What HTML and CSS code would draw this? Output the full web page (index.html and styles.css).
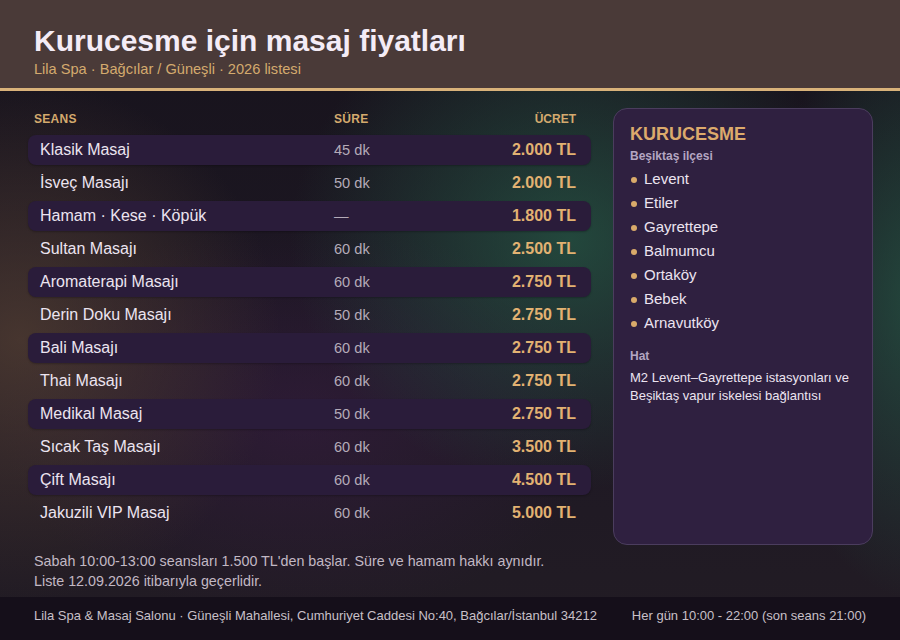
FILE: index.html
```html
<!DOCTYPE html>
<html lang="tr">
<head>
<meta charset="utf-8">
<title>Kurucesme için masaj fiyatları</title>
<link rel="stylesheet" href="styles.css">
</head>
<body>
<div class="page">
  <header class="top">
    <h1 class="title">Kurucesme için masaj fiyatları</h1>
    <p class="subtitle">Lila Spa · Bağcılar / Güneşli · 2026 listesi</p>
  </header>
  <main class="main">
    <section class="prices">
      <div class="colheads">
        <span>SEANS</span>
        <span>SÜRE</span>
        <span class="right">ÜCRET</span>
      </div>
      <div class="rows">
        <div class="row alt"><span class="name">Klasik Masaj</span><span class="dur">45 dk</span><span class="price">2.000 TL</span></div>
        <div class="row"><span class="name">İsveç Masajı</span><span class="dur">50 dk</span><span class="price">2.000 TL</span></div>
        <div class="row alt"><span class="name">Hamam · Kese · Köpük</span><span class="dur">—</span><span class="price">1.800 TL</span></div>
        <div class="row"><span class="name">Sultan Masajı</span><span class="dur">60 dk</span><span class="price">2.500 TL</span></div>
        <div class="row alt"><span class="name">Aromaterapi Masajı</span><span class="dur">60 dk</span><span class="price">2.750 TL</span></div>
        <div class="row"><span class="name">Derin Doku Masajı</span><span class="dur">50 dk</span><span class="price">2.750 TL</span></div>
        <div class="row alt"><span class="name">Bali Masajı</span><span class="dur">60 dk</span><span class="price">2.750 TL</span></div>
        <div class="row"><span class="name">Thai Masajı</span><span class="dur">60 dk</span><span class="price">2.750 TL</span></div>
        <div class="row alt"><span class="name">Medikal Masaj</span><span class="dur">50 dk</span><span class="price">2.750 TL</span></div>
        <div class="row"><span class="name">Sıcak Taş Masajı</span><span class="dur">60 dk</span><span class="price">3.500 TL</span></div>
        <div class="row alt"><span class="name">Çift Masajı</span><span class="dur">60 dk</span><span class="price">4.500 TL</span></div>
        <div class="row"><span class="name">Jakuzili VIP Masaj</span><span class="dur">60 dk</span><span class="price">5.000 TL</span></div>
      </div>
    </section>
    <aside class="panel">
      <h2 class="panel-title">KURUCESME</h2>
      <div class="label">Beşiktaş ilçesi</div>
      <ul class="places">
        <li>Levent</li>
        <li>Etiler</li>
        <li>Gayrettepe</li>
        <li>Balmumcu</li>
        <li>Ortaköy</li>
        <li>Bebek</li>
        <li>Arnavutköy</li>
      </ul>
      <div class="label hat">Hat</div>
      <p class="desc">M2 Levent–Gayrettepe istasyonları ve Beşiktaş vapur iskelesi bağlantısı</p>
    </aside>
  </main>
  <div class="notes">
    <p>Sabah 10:00-13:00 seansları 1.500 TL'den başlar. Süre ve hamam hakkı aynıdır.</p>
    <p>Liste 12.09.2026 itibarıyla geçerlidir.</p>
  </div>
  <footer class="foot">
    <span>Lila Spa &amp; Masaj Salonu · Güneşli Mahallesi, Cumhuriyet Caddesi No:40, Bağcılar/İstanbul 34212</span>
    <span>Her gün 10:00 - 22:00 (son seans 21:00)</span>
  </footer>
</div>
</body>
</html>
```
FILE: styles.css
```css
* { box-sizing: border-box; }
html, body { margin: 0; padding: 0; }
body {
  width: 900px;
  height: 640px;
  overflow: hidden;
  font-family: "Liberation Sans", Arial, sans-serif;
  color: #ece4f0;
  background: #1a1520;
}
.page {
  width: 900px;
  height: 640px;
  display: flex;
  flex-direction: column;
  background:
    radial-gradient(ellipse 280px 250px at 570px 240px, rgba(38, 92, 72, 0.7), rgba(38, 92, 72, 0) 100%),
    radial-gradient(ellipse 160px 300px at 920px 300px, rgba(38, 92, 72, 0.7), rgba(38, 92, 72, 0) 100%),
    radial-gradient(ellipse 260px 260px at 20px 340px, rgba(88, 66, 52, 0.7), rgba(88, 66, 52, 0) 100%),
    radial-gradient(ellipse 300px 200px at 300px 420px, rgba(60, 30, 70, 0.5), rgba(60, 30, 70, 0) 100%),
    linear-gradient(180deg, #17131c 0%, #1e1824 60%, #221c24 100%);
}
.top {
  height: 91px;
  background: #4a3a38;
  border-bottom: 3px solid #d9b27a;
  padding: 25px 34px 0;
}
.title {
  margin: 0;
  font-size: 30px;
  line-height: 32px;
  font-weight: 700;
  color: #f4ecf6;
}
.subtitle {
  margin: 3px 0 0;
  font-size: 14.6px;
  line-height: 18px;
  color: #d4aa6e;
}
.main {
  display: flex;
  gap: 22px;
  padding: 17px 27px 0 28px;
  height: 454px;
}
.prices {
  width: 563px;
}
.colheads {
  display: grid;
  grid-template-columns: 300px 1fr auto;
  padding: 4px 15px 0 6px;
  height: 27px;
  font-size: 12px;
  line-height: 14px;
  font-weight: 700;
  letter-spacing: 0.3px;
  color: #d4aa6e;
}
.colheads .right { text-align: right; letter-spacing: 0; }
.rows {
  display: flex;
  flex-direction: column;
  gap: 3px;
}
.row {
  display: grid;
  grid-template-columns: 294px 1fr auto;
  align-items: center;
  height: 30px;
  padding: 0 15px 0 12px;
  border-radius: 8px;
}
.row.alt {
  background: #2a1c3a;
  box-shadow: 0 1px 2px rgba(0, 0, 0, 0.25);
}
.name {
  font-size: 16px;
  color: #ece4f0;
}
.dur {
  font-size: 14.6px;
  color: #b4abb8;
}
.price {
  font-size: 16px;
  font-weight: 700;
  color: #e2b272;
  text-align: right;
}
.panel {
  width: 260px;
  height: 437px;
  background: #2f2040;
  border: 1px solid #4b3d5e;
  border-radius: 14px;
  padding: 15px 16px;
}
.panel-title {
  margin: 0;
  font-size: 18px;
  line-height: 20px;
  font-weight: 700;
  color: #dcaa6c;
}
.label {
  margin-top: 5px;
  font-size: 12px;
  line-height: 14px;
  font-weight: 700;
  color: #b4a6c2;
}
.places {
  list-style: none;
  margin: 4px 0 0;
  padding: 0;
}
.places li {
  display: flex;
  align-items: center;
  gap: 7px;
  font-size: 15px;
  line-height: 24px;
  color: #ece4f0;
}
.places li::before {
  content: "";
  width: 6px;
  height: 6px;
  border-radius: 50%;
  background: #d9aa6a;
  margin-left: 1px;
  margin-top: 2px;
}
.label.hat {
  margin-top: 14px;
}
.desc {
  margin: 6px 0 0;
  font-size: 13px;
  line-height: 18px;
  color: #ece4f0;
}
.notes {
  padding: 6px 34px 0;
  height: 52px;
  font-size: 14.3px;
  line-height: 20px;
  color: #c2b8c4;
}
.notes p { margin: 0; }
.foot {
  margin-top: auto;
  height: 43px;
  display: flex;
  justify-content: space-between;
  align-items: flex-start;
  padding: 11px 34px 0;
  background: #150f1a;
  font-size: 13px;
  line-height: 16px;
  color: #c8c0c8;
}
```
